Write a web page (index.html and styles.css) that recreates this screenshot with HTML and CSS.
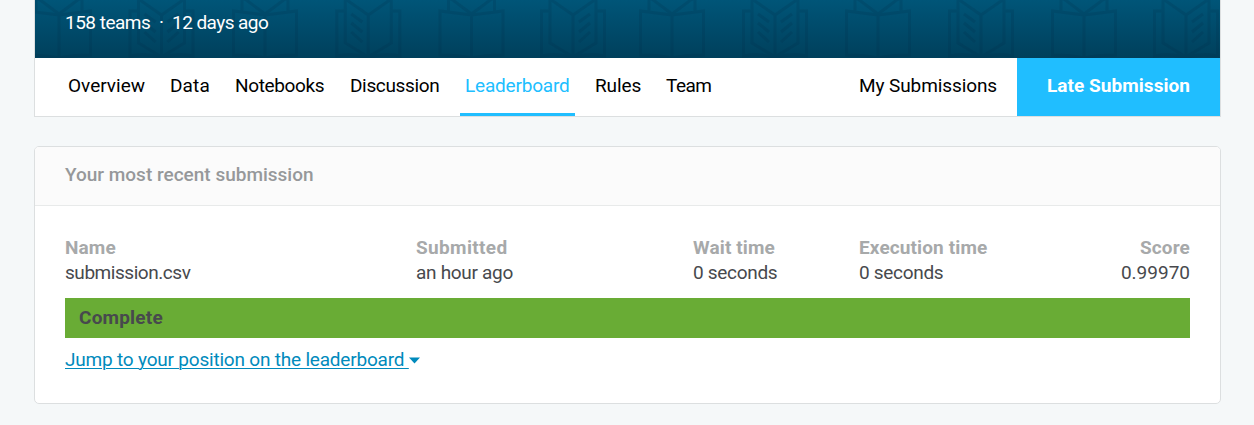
FILE: index.html
```
<!DOCTYPE html>
<html lang="en">
<head>
<meta charset="utf-8">
<title>Leaderboard</title>
<link rel="stylesheet" href="styles.css">
</head>
<body>
<header class="competition">
  <div class="banner">
    <svg class="books" width="1185" height="58" viewBox="35 0 1185 58" aria-hidden="true">
      <defs>
        <g id="closed"><path d="M0 15L-31.500 11V55Q-14 55 0 58Q14 55 31.500 55V11L0 15V58M-23 11V-1H-20L0 14L20 -1H23V11"/></g>
        <g id="open"><path d="M-24 11H-31.500V56Q-14 53 0 58Q14 53 31.500 56V11H24M0 15L-23 -1V43L0 57L23 43V-1L0 15V57"/></g>
        <path id="left" d="M-17 14L-6 22M-17 23L-6 32M-17 32L-6 42"/>
        <path id="right" d="M17 14L6 22M17 23L6 32M17 32L6 42"/>
      </defs>
      <use href="#closed" x="59"/>
      <use href="#open" x="161.5"/><use href="#left" x="161.5"/><use href="#right" x="161.5"/>
      <use href="#closed" x="265"/>
      <use href="#open" x="368.3"/><use href="#left" x="368.3"/>
      <use href="#closed" x="471.5"/>
      <use href="#open" x="573"/><use href="#right" x="573"/>
      <use href="#closed" x="672"/>
      <use href="#open" x="775"/><use href="#left" x="775"/><use href="#right" x="775"/>
      <use href="#closed" x="878"/>
      <use href="#open" x="981"/><use href="#left" x="981"/>
      <use href="#closed" x="1084"/>
      <use href="#open" x="1186"/><use href="#right" x="1186"/>
    </svg>
    <div class="meta"><span class="teams">158 teams</span><span class="dot">·</span><span class="ago">12 days ago</span></div>
  </div>
  <nav class="tabs">
    <a class="tab overview">Overview</a>
    <a class="tab data">Data</a>
    <a class="tab notebooks">Notebooks</a>
    <a class="tab discussion">Discussion</a>
    <a class="tab leaderboard active">Leaderboard</a>
    <a class="tab rules">Rules</a>
    <a class="tab team">Team</a>
    <a class="tab mine">My Submissions</a>
    <a class="late"><span>Late Submission</span></a>
  </nav>
</header>
<section class="card">
  <h2 class="card-title"><span>Your most recent submission</span></h2>
  <div class="card-body">
    <div class="details">
      <div><b>Name</b><span class="file">submission.csv</span></div>
      <div><b class="submitted">Submitted</b><span>an hour ago</span></div>
      <div><b>Wait time</b><span>0 seconds</span></div>
      <div><b>Execution time</b><span>0 seconds</span></div>
      <div class="score"><b>Score</b><span>0.99970</span></div>
    </div>
    <div class="status">Complete</div>
    <a class="jump"><span>Jump to your position on the leaderboard&nbsp;</span><svg width="11" height="7" viewBox="0 0 11 7"><path d="M0 0.5H11L5.5 6.5Z"/></svg></a>
  </div>
</section>
</body>
</html>
```
FILE: styles.css
```
* { box-sizing: border-box; }
body {
  margin: 0;
  padding: 0 33px 0 34px;
  background: #f5f8f9;
  font: 400 19px/25px Roboto, "Liberation Sans", sans-serif;
  color: #47494d;
}
.competition { height: 117px; border: 1px solid #dcdfe0; border-top: 0; background: #fff; }
.banner {
  position: relative;
  height: 58px;
  overflow: hidden;
  background: linear-gradient(#005578, #00405c);
}
.books {
  position: absolute;
  inset: 0;
  fill: none;
  stroke: #002f49;
  stroke-opacity: .18;
  stroke-width: 3;
}
.meta { position: relative; display: flex; padding: 10px 30px; color: #fff; white-space: nowrap; }
.teams { width: 86px; letter-spacing: -.5px; }
.dot { width: 21px; text-align: center; }
.ago { letter-spacing: -.55px; }
.tabs { display: flex; height: 58px; color: #000; }
.tab { height: 58px; padding-top: 15px; white-space: nowrap; }
.overview { margin-left: 33px; width: 102px; }
.data { width: 65px; letter-spacing: .15px; }
.notebooks { width: 115px; letter-spacing: -.35px; }
.discussion { width: 110px; letter-spacing: -.35px; }
.leaderboard { width: 115px; padding-left: 5px; letter-spacing: -.2px; }
.active { color: #20beff; border-bottom: 3px solid #20beff; }
.rules { margin-left: 20px; width: 71px; letter-spacing: -.1px; }
.team { letter-spacing: -.5px; }
.mine { margin-left: auto; margin-right: 20px; letter-spacing: -.1px; }
.late {
  width: 203px;
  padding: 15px 0 0 30px;
  background: #20beff;
  color: #fff;
  font-weight: 700;
  letter-spacing: .05px;
}
.card { height: 258px; margin-top: 29px; border: 1px solid #dcdfe0; border-radius: 5px; background: #fff; overflow: hidden; }
.card-title {
  height: 59px;
  margin: 0;
  padding: 15px 30px;
  border-bottom: 1px solid #e8eaea;
  background: #fbfbfb;
  color: #96989a;
  font-size: 19px;
  font-weight: 500;
}
.card-body { padding: 29px 30px; }
.details { display: grid; grid-template-columns: 351px 277px 166px 1fr auto; }
.details b, .details span { display: block; letter-spacing: -.3px; }
.details b { color: #a7a9aa; font-weight: 700; letter-spacing: .12px; }
.details .submitted { letter-spacing: .35px; }
.details .file { letter-spacing: -.45px; }
.score { text-align: right; }
.details .score span { letter-spacing: 0; }
.status { height: 40px; margin-top: 13px; padding: 7px 14px; background: #69ac35; font-weight: 700; letter-spacing: .2px; }
.jump { display: flex; align-items: center; margin-top: 9px; color: #008abc; letter-spacing: -.2px; }
.jump span { text-decoration: underline; text-underline-offset: 2px; text-decoration-thickness: 1px; }
.jump svg { margin-top: 1px; fill: #008abc; }
```
